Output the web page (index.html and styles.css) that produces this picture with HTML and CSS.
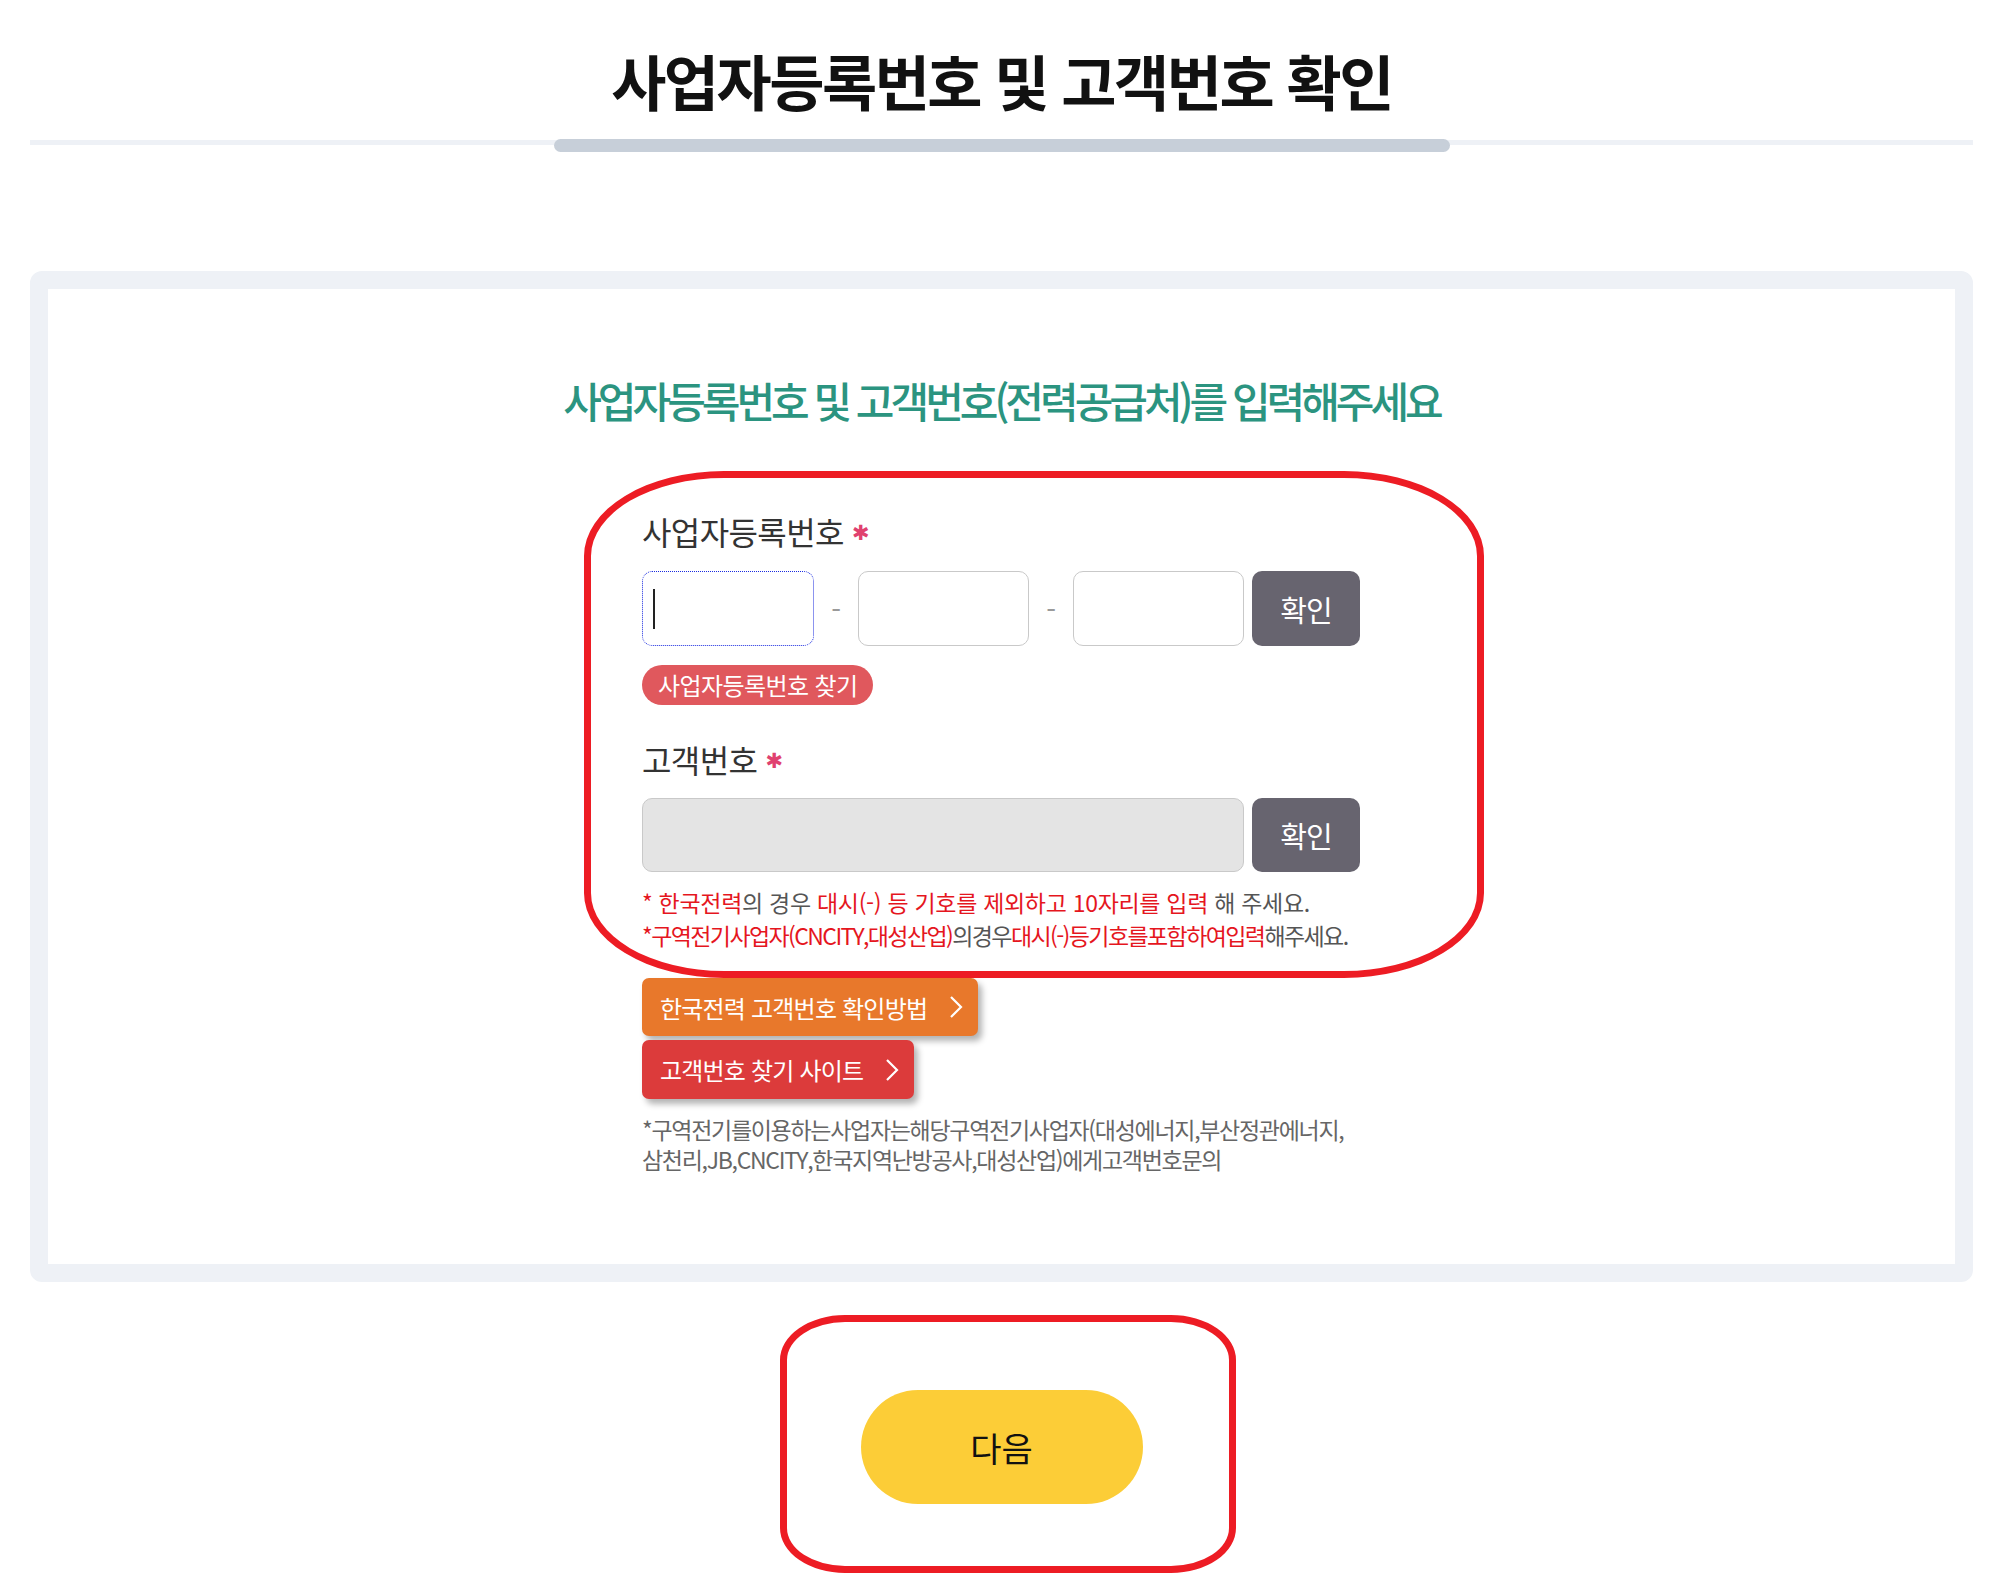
FILE: index.html
```html
<!DOCTYPE html>
<html lang="ko">
<head>
    <meta charset="UTF-8">
    <meta name="viewport" content="width=device-width, initial-scale=1.0">
    <title>사업자등록번호 및 고객번호 확인</title>
    <link rel="stylesheet" href="styles.css">
</head>
<body>
    <div class="page">
        <header class="page-head">
            <h1>사업자등록번호 및 고객번호 확인</h1>
            <div class="head-rule"><span class="head-bar"></span></div>
        </header>

        <section class="panel">
            <h2 class="panel-title">사업자등록번호 및 고객번호(전력공급처)를 입력해주세요</h2>

            <div class="form">
                <div class="field">
                    <label class="field-label">사업자등록번호<span class="req">✱</span></label>
                    <div class="field-row">
                        <span class="caret-wrap"><input type="text" class="box is-focused" maxlength="3"></span>
                        <span class="dash">-</span>
                        <input type="text" class="box" maxlength="2">
                        <span class="dash">-</span>
                        <input type="text" class="box" maxlength="5">
                        <button class="btn-check">확인</button>
                    </div>
                    <a class="pill" href="#">사업자등록번호 찾기</a>
                </div>

                <div class="field field-customer">
                    <label class="field-label">고객번호<span class="req">✱</span></label>
                    <div class="field-row">
                        <input type="text" class="box box-wide" disabled>
                        <button class="btn-check">확인</button>
                    </div>
                    <p class="note">
                        <em>* 한국전력</em>의 경우 <em>대시(-) 등 기호를 제외하고 10자리를 입력</em> 해 주세요.
                    </p>
                    <p class="note note-tight">
                        <em>*구역전기사업자(CNCITY,대성산업)</em>의경우<em>대시(-)등기호를포함하여입력</em>해주세요.
                    </p>
                </div>

                <div class="links">
                    <a class="link-btn link-orange" href="#">한국전력 고객번호 확인방법
                        <svg width="14" height="24" viewBox="0 0 14 24"><polyline points="2,2 12,12 2,22" fill="none" stroke="#fff" stroke-width="2.2"/></svg>
                    </a>
                    <a class="link-btn link-red" href="#">고객번호 찾기 사이트
                        <svg width="14" height="24" viewBox="0 0 14 24"><polyline points="2,2 12,12 2,22" fill="none" stroke="#fff" stroke-width="2.2"/></svg>
                    </a>
                </div>

                <p class="footnote">*구역전기를이용하는사업자는해당구역전기사업자(대성에너지,부산정관에너지,<br>삼천리,JB,CNCITY,한국지역난방공사,대성산업)에게고객번호문의</p>
            </div>
        </section>

        <div class="actions">
            <button class="btn-next">다음</button>
        </div>

        <!-- 빨간 표시선 -->
        <div class="mark mark-form"></div>
        <div class="mark mark-next"></div>
    </div>
</body>
</html>
```

FILE: styles.css
```css
body {
    margin: 0;
    font-family: "Noto Sans CJK KR", "Noto Sans", sans-serif;
    color: #222;
    background-color: #fff;
}
.page {
    position: relative;
    box-sizing: border-box;
    min-height: 1594px;
    padding: 0 25px 0 30px;
}
.page-head {
    padding-top: 44px;
}
h1 {
    margin: 0;
    font-size: 60px;
    line-height: 72px;
    font-weight: 700;
    text-align: center;
    color: #111;
    letter-spacing: -2.5px;
}
.head-rule {
    margin-top: 23px;
    height: 13px;
    display: flex;
    justify-content: center;
    background: linear-gradient(#eef1f6, #eef1f6) 0 1px / 100% 5px no-repeat;
}
.head-bar {
    width: 896px;
    height: 13px;
    border-radius: 7px;
    background-color: #c7cfd9;
}
.panel {
    margin-top: 119px;
    border: 18px solid #eef1f6;
    border-radius: 12px;
    padding: 86px 0 90px;
}
.panel-title {
    margin: 0;
    font-size: 42px;
    line-height: 50px;
    font-weight: 500;
    text-align: center;
    color: #2b9480;
    letter-spacing: -4px;
}
.form {
    width: 719px;
    margin: 84px auto 0;
}
.field-label {
    display: flex;
    align-items: center;
    font-size: 32px;
    line-height: 40px;
    color: #333;
    letter-spacing: -0.6px;
}
.req {
    margin-left: 8px;
    margin-top: 4px;
    color: #e0416f;
    font-family: "DejaVu Sans", sans-serif;
    font-size: 21px;
    font-weight: 700;
}
.field-row {
    display: flex;
    align-items: center;
    margin-top: 18px;
}
.box {
    box-sizing: border-box;
    width: 171px;
    height: 75px;
    border: 1px solid #c9c9c9;
    border-radius: 10px;
    background-color: #fff;
    font-size: 24px;
    padding: 0 12px;
    outline: none;
}
.box.is-focused {
    width: 172px;
    border: 1px dotted #1a2be0;
}
.caret-wrap {
    position: relative;
    display: flex;
}
.caret-wrap::after {
    content: "";
    position: absolute;
    left: 11px;
    top: 18px;
    width: 2px;
    height: 40px;
    background-color: #222;
}
.box-wide {
    width: 602px;
    height: 74px;
    background-color: #e4e4e4;
}
.dash {
    width: 44px;
    text-align: center;
    color: #9a9a9a;
    font-size: 28px;
}
.btn-check {
    margin-left: 8px;
    width: 108px;
    height: 75px;
    border: none;
    border-radius: 10px;
    background-color: #67646f;
    color: #fff;
    font-family: inherit;
    font-size: 29px;
    letter-spacing: -1px;
}
.field-customer .btn-check {
    height: 74px;
}
.pill {
    display: inline-block;
    margin-top: 19px;
    height: 40px;
    line-height: 40px;
    padding: 0 16px;
    border-radius: 20px;
    background-color: #e0585d;
    color: #fff;
    font-size: 24px;
    letter-spacing: -0.6px;
    text-decoration: none;
}
.field-customer {
    margin-top: 32px;
}
.field-customer .field-row {
    margin-top: 17px;
}
.note {
    margin: 0;
    font-size: 23px;
    line-height: 33px;
    color: #555;
    letter-spacing: -0.3px;
}
.field-customer .note:first-of-type {
    margin-top: 14px;
}
.note em {
    font-style: normal;
    color: #e5161e;
}
.note-tight {
    letter-spacing: -1.6px;
}
.links {
    margin-top: 26px;
    display: flex;
    flex-direction: column;
    align-items: flex-start;
    gap: 4px;
}
.link-btn {
    display: flex;
    align-items: center;
    gap: 22px;
    height: 58px;
    padding: 0 15px 0 18px;
    border-radius: 7px;
    color: #fff;
    font-size: 24px;
    letter-spacing: -0.8px;
    text-decoration: none;
    box-shadow: 4px 5px 6px rgba(0, 0, 0, 0.3);
}
.link-orange {
    background-color: #e8782b;
}
.link-red {
    height: 59px;
    background-color: #dc3b3b;
}
.footnote {
    margin: 15px 0 0;
    font-size: 23px;
    line-height: 30px;
    color: #666;
    letter-spacing: -1.3px;
}
.actions {
    margin-top: 108px;
    display: flex;
    justify-content: center;
}
.btn-next {
    width: 282px;
    height: 114px;
    border: none;
    border-radius: 57px;
    background-color: #fccd37;
    color: #111;
    font-family: inherit;
    font-size: 34px;
}
.mark {
    position: absolute;
    box-sizing: border-box;
    border: 7px solid #ed1c24;
    pointer-events: none;
}
.mark-form {
    left: 584px;
    top: 471px;
    width: 900px;
    height: 507px;
    border-radius: 140px / 85px;
}
.mark-next {
    left: 780px;
    top: 1315px;
    width: 456px;
    height: 258px;
    border-radius: 65px / 45px;
}
```
